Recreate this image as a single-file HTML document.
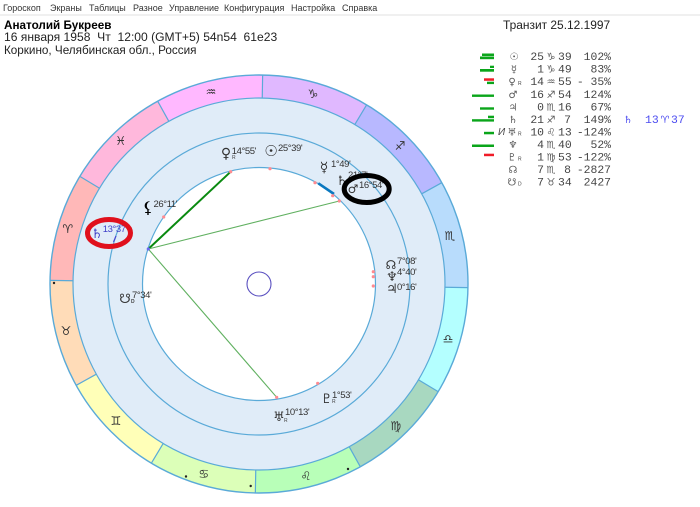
<!DOCTYPE html>
<html><head><meta charset="utf-8">
<style>
html,body{margin:0;padding:0;background:#fff;width:700px;height:507px;overflow:hidden}
#ring{position:absolute;left:50px;top:75px;width:418px;height:418px;border-radius:50%;
background:conic-gradient(from 1deg,#e0b8ff 0 30deg,#b8b8ff 30deg 60deg,#b8dcfc 60deg 90deg,#b4ffff 90deg 120deg,#a8d8c0 120deg 150deg,#b8ffb8 150deg 180deg,#dcffb8 180deg 210deg,#ffffb8 210deg 240deg,#ffdcb8 240deg 270deg,#ffb8b8 270deg 300deg,#ffb8dc 300deg 330deg,#ffb8ff 330deg 360deg)}
svg{position:absolute;left:0;top:0}
.m{font:9px "Liberation Sans",sans-serif;fill:#333}
.h{font:11.7px "Liberation Sans",sans-serif;fill:#222}
.g{font:11px "DejaVu Sans",sans-serif;fill:#333;text-anchor:middle}
.z{font:12px "DejaVu Sans",sans-serif;fill:#333;text-anchor:middle}
.l{font:9.5px "Liberation Sans",sans-serif;fill:#333;letter-spacing:-.4px}
.r{font:5px "Liberation Sans",sans-serif;fill:#444}
.t{font:11.4px "Liberation Mono",monospace;fill:#444}
.e{text-anchor:end}
.s{font:10px "DejaVu Sans",sans-serif;fill:#555;text-anchor:middle}
</style></head><body>
<div id="ring"></div>
<svg width="700" height="507" viewBox="0 0 700 507">
<rect x="0" y="14" width="700" height="2" fill="#f0f0f0"/>
<text class="m" x="3" y="11">Гороскоп</text><text class="m" x="50" y="11">Экраны</text><text class="m" x="89" y="11">Таблицы</text><text class="m" x="133" y="11">Разное</text><text class="m" x="169" y="11">Управление</text><text class="m" x="224" y="11">Конфигурация</text><text class="m" x="291" y="11">Настройка</text><text class="m" x="342" y="11">Справка</text>

<text class="h" x="4" y="29" style="font-weight:bold;fill:#000">Анатолий Букреев</text>
<text class="h" x="4" y="41" xml:space="preserve" style="font-size:12.1px">16 января 1958  Чт  12:00 (GMT+5) 54n54  61e23</text>
<text class="h" x="4" y="54">Коркино, Челябинская обл., Россия</text>
<text class="h" x="503" y="29" style="font-size:11.95px">Транзит 25.12.1997</text>

<g fill="none" stroke="#5aaad8" stroke-width="1.2">
<circle cx="259" cy="284" r="209" stroke-width="1.4"/>
<circle cx="259" cy="284" r="186" fill="#e0ecf8"/>
<circle cx="259" cy="284" r="151"/>
<circle cx="259" cy="284" r="116.5" fill="#fff"/>
<g>
<line x1="259" y1="75" x2="259" y2="98" transform="rotate(1 259 284)"/>
<line x1="259" y1="75" x2="259" y2="98" transform="rotate(31 259 284)"/>
<line x1="259" y1="75" x2="259" y2="98" transform="rotate(61 259 284)"/>
<line x1="259" y1="75" x2="259" y2="98" transform="rotate(91 259 284)"/>
<line x1="259" y1="75" x2="259" y2="98" transform="rotate(121 259 284)"/>
<line x1="259" y1="75" x2="259" y2="98" transform="rotate(151 259 284)"/>
<line x1="259" y1="75" x2="259" y2="98" transform="rotate(181 259 284)"/>
<line x1="259" y1="75" x2="259" y2="98" transform="rotate(211 259 284)"/>
<line x1="259" y1="75" x2="259" y2="98" transform="rotate(241 259 284)"/>
<line x1="259" y1="75" x2="259" y2="98" transform="rotate(271 259 284)"/>
<line x1="259" y1="75" x2="259" y2="98" transform="rotate(301 259 284)"/>
<line x1="259" y1="75" x2="259" y2="98" transform="rotate(331 259 284)"/>
</g>
</g>

<circle cx="259" cy="284" r="12" fill="#fff" stroke="#5a50c0" stroke-width="1.1"/>
<line x1="148.3" y1="249" x2="230.7" y2="171.7" stroke="#0a8a10" stroke-width="2"/>
<line x1="148.3" y1="249" x2="339.3" y2="201" stroke="#60b060" stroke-width="1.1"/>
<line x1="148.3" y1="249" x2="276.7" y2="397.3" stroke="#60b060" stroke-width="1.1"/>
<line x1="318.3" y1="183.3" x2="334" y2="194" stroke="#0a78c0" stroke-width="2.6"/>
<g fill="#ff8a90">
<circle cx="163.7" cy="217" r="1.6"/><circle cx="230.7" cy="171.7" r="1.6"/><circle cx="270" cy="168.7" r="1.6"/><circle cx="315" cy="182.7" r="1.6"/><circle cx="332.7" cy="195.7" r="1.6"/><circle cx="339.3" cy="201" r="1.6"/><circle cx="373.3" cy="271.7" r="1.6"/><circle cx="373.3" cy="276.7" r="1.6"/><circle cx="373.3" cy="286" r="1.6"/><circle cx="317.7" cy="383.3" r="1.6"/><circle cx="276.7" cy="397.3" r="1.6"/>
</g>
<circle cx="148.3" cy="249" r="1.6" fill="#6a6af0"/>
<line x1="113.5" y1="242" x2="116" y2="236" stroke="#4a4ad0" stroke-width="1.2"/>

<text class="z" x="211" y="96">♒</text><text class="z" x="120.7" y="145">♓</text><text class="z" x="67.7" y="233">♈</text><text class="z" x="66" y="335">♉</text><text class="z" x="116" y="425">♊</text><text class="z" x="203.7" y="478">♋</text><text class="z" x="306" y="480">♌</text><text class="z" x="395.7" y="430">♍</text><text class="z" x="448" y="343">♎</text><text class="z" x="450" y="240">♏</text><text class="z" x="400" y="150">♐</text><text class="z" x="313" y="98">♑</text>
<g fill="#222"><circle cx="54" cy="283" r="1.2"/><circle cx="186" cy="476.5" r="1.2"/><circle cx="250.7" cy="486" r="1.2"/><circle cx="348" cy="469" r="1.2"/></g>

<text class="g" x="226" y="158" style="font-size:14px">♀</text><text class="l" x="231.7" y="154">14°55'</text><text class="r" x="232" y="159">R</text>
<text class="g" x="271" y="156" style="font-size:15px">☉</text><text class="l" x="278" y="151">25°39'</text>
<text class="g" x="324" y="172" style="font-size:14px">☿</text><text class="l" x="331" y="167">1°49'</text>
<text class="g" x="342" y="185" style="font-size:13px">♄</text><text class="l" x="348" y="178">21°7'</text>
<text class="g" x="353" y="193" style="font-size:12px">♂</text><text class="l" x="359" y="188">16°54'</text>
<text class="g" x="391" y="269" style="font-size:12px">☊</text><text class="l" x="397" y="264">7°08'</text>
<text class="g" x="392" y="281" style="font-size:13px">♆</text><text class="l" x="397" y="275">4°40'</text>
<text class="g" x="392" y="293" style="font-size:13px">♃</text><text class="l" x="397" y="290">0°16'</text>
<text class="g" x="326.7" y="403" style="font-size:13px">♇</text><text class="l" x="332" y="398">1°53'</text><text class="r" x="332" y="403">R</text>
<text class="g" x="279" y="421" style="font-size:13px">♅</text><text class="l" x="285" y="415">10°13'</text><text class="r" x="284" y="422">R</text>
<text class="g" x="125" y="303" style="font-size:13px">☋</text><text class="l" x="132" y="298">7°34'</text><text class="r" x="131" y="303" style="font-weight:bold">D</text>
<text class="g" x="148" y="213" style="font-size:16px;font-weight:bold;fill:#000">⚸</text><text class="l" x="153.5" y="207">26°11'</text>
<text class="g" x="97" y="238" style="font-size:13px;fill:#4040c8">♄</text><text class="l" x="102.7" y="232" style="fill:#4040c8">13°37'</text>

<ellipse cx="109" cy="233" rx="21.5" ry="13.5" fill="none" stroke="#e0101c" stroke-width="5"/>
<ellipse cx="366.7" cy="189" rx="22.5" ry="13.5" fill="none" stroke="#000" stroke-width="5"/>

<g fill="#0aa51a">
<rect x="482" y="53.5" width="12" height="2.5"/><rect x="480" y="56.5" width="14" height="2.7"/>
<rect x="490" y="65.7" width="4" height="2.3"/><rect x="480" y="69" width="14" height="2.7"/>
<rect x="487" y="81.7" width="7" height="2.4"/>
<rect x="472" y="94.5" width="22" height="2.4"/>
<rect x="480" y="107.3" width="14" height="2.4"/>
<rect x="488" y="115.7" width="6" height="2.5"/><rect x="472" y="119.2" width="22" height="2.4"/>
<rect x="484" y="131.8" width="10" height="2.5"/>
<rect x="472" y="144.5" width="22" height="2.5"/>
</g>
<g fill="#f01c28"><rect x="484" y="78.3" width="10" height="2.5"/><rect x="484" y="153.7" width="10" height="2.5"/></g>
<text x="498" y="135" style="font:10px 'Liberation Sans',sans-serif;font-style:italic;fill:#444">И</text>

<text class="s" x="514" y="60">☉</text><text class="t e" x="544" y="60">25</text><text class="s" x="551" y="60">♑</text><text class="t" x="558" y="60">39</text><text class="t e" x="611" y="60">102%</text>
<text class="s" x="514" y="72.5">☿</text><text class="t e" x="544" y="72.5">1</text><text class="s" x="551" y="72.5">♑</text><text class="t" x="558" y="72.5">49</text><text class="t e" x="611" y="72.5">83%</text>
<text class="s" x="512" y="85">♀</text><text class="r" x="518" y="85">R</text><text class="t e" x="544" y="85">14</text><text class="s" x="551" y="85">♒</text><text class="t" x="558" y="85">55</text><text class="t e" x="611" y="85">- 35%</text>
<text class="s" x="513" y="98">♂</text><text class="t e" x="544" y="98">16</text><text class="s" x="551" y="98">♐</text><text class="t" x="558" y="98">54</text><text class="t e" x="611" y="98">124%</text>
<text class="s" x="513" y="110.5">♃</text><text class="t e" x="544" y="110.5">0</text><text class="s" x="551" y="110.5">♏</text><text class="t" x="558" y="110.5">16</text><text class="t e" x="611" y="110.5">67%</text>
<text class="s" x="513" y="123">♄</text><text class="t e" x="544" y="123">21</text><text class="s" x="551" y="123">♐</text><text class="t e" x="571" y="123">7</text><text class="t e" x="611" y="123">149%</text>
<text class="s" x="512" y="135.5">♅</text><text class="r" x="518" y="135.5">R</text><text class="t e" x="544" y="135.5">10</text><text class="s" x="551" y="135.5">♌</text><text class="t" x="558" y="135.5">13</text><text class="t e" x="611" y="135.5">-124%</text>
<text class="s" x="513" y="148">♆</text><text class="t e" x="544" y="148">4</text><text class="s" x="551" y="148">♏</text><text class="t" x="558" y="148">40</text><text class="t e" x="611" y="148">52%</text>
<text class="s" x="512" y="160.5">♇</text><text class="r" x="518" y="160.5">R</text><text class="t e" x="544" y="160.5">1</text><text class="s" x="551" y="160.5">♍</text><text class="t" x="558" y="160.5">53</text><text class="t e" x="611" y="160.5">-122%</text>
<text class="s" x="513" y="173">☊</text><text class="t e" x="544" y="173">7</text><text class="s" x="551" y="173">♏</text><text class="t e" x="571" y="173">8</text><text class="t e" x="611" y="173">-2827</text>
<text class="s" x="512" y="185.5">☋</text><text class="r" x="518" y="185.5">D</text><text class="t e" x="544" y="185.5">7</text><text class="s" x="551" y="185.5">♉</text><text class="t" x="558" y="185.5">34</text><text class="t e" x="611" y="185.5">2427</text>

<text class="s" x="628" y="123" style="fill:#4a4af0">♄</text><text class="t" x="645" y="123" style="fill:#4a4af0">13</text><text class="s" x="665" y="123" style="fill:#4a4af0">♈</text><text class="t" x="671" y="123" style="fill:#4a4af0">37</text>
</svg>
</body></html>
